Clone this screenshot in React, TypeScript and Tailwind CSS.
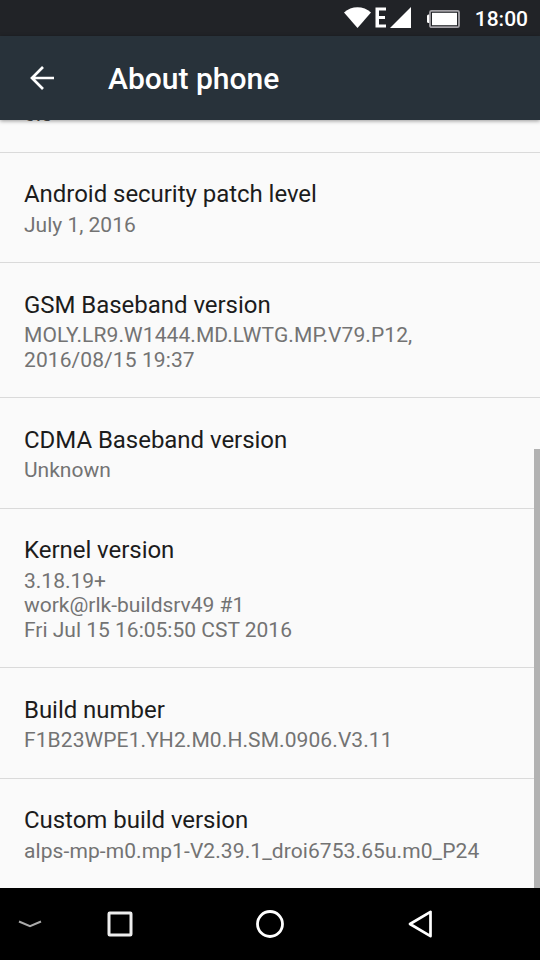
interface AboutEntry {
  title: string
  summary: string[]
  wide?: boolean
}

const entries: AboutEntry[] = [
  { title: "Android security patch level", summary: ["July 1, 2016"] },
  { title: "GSM Baseband version", summary: ["MOLY.LR9.W1444.MD.LWTG.MP.V79.P12,", "2016/08/15 19:37"], wide: true },
  { title: "CDMA Baseband version", summary: ["Unknown"] },
  { title: "Kernel version", summary: ["3.18.19+", "work@rlk-buildsrv49 #1", "Fri Jul 15 16:05:50 CST 2016"] },
  { title: "Build number", summary: ["F1B23WPE1.YH2.M0.H.SM.0906.V3.11"], wide: true },
  { title: "Custom build version", summary: ["alps-mp-m0.mp1-V2.39.1_droi6753.65u.m0_P24"], wide: true },
]

function StatusBar() {
  return (
    <div className="flex h-9 shrink-0 items-center justify-end bg-[#212327] pr-3 text-white">
      {/* Wifi and mobile signal */}
      <svg className="h-9 w-[68px]" viewBox="0 0 68 36" fill="currentColor">
        <path d="M0 12.5C7.5 5.5 19.5 5.5 27 12.5L13.5 28Z" />
        <path d="M31.5 7.5H42V10.5H35V16H41V19H35V24.5H42V27.5H31.5Z" />
        <path d="M67 7V28H46Z" />
      </svg>
      {/* Battery */}
      <svg className="ml-[14px] h-9 w-[34px]" viewBox="0 0 34 36" fill="none">
        <path d="M4 14.5H2.5Q1 14.5 1 16V21.5Q1 23 2.5 23H4Z" fill="white" />
        <rect x="4" y="10.8" width="29" height="16.4" rx="1.5" stroke="#a5a3a8" strokeWidth="1.8" />
        <rect x="6" y="12.8" width="25" height="12.4" fill="white" />
      </svg>
      <span className="ml-[15px] pt-[2px] text-[21px] font-medium leading-none">18:00</span>
    </div>
  )
}

function Toolbar() {
  return (
    <header className="z-10 flex h-[84px] shrink-0 items-center bg-[#28323a] pl-[29px] text-white shadow-[0_1px_4px_rgba(0,0,0,0.4)]">
      <svg className="h-[26px] w-[26px]" viewBox="0 0 26 26" fill="none" stroke="currentColor" strokeWidth="2.7">
        <path d="M25 13H3M14 2L3 13L14 24" />
      </svg>
      <h1 className="ml-[53px] pt-px text-[30px] font-medium leading-none">About phone</h1>
    </header>
  )
}

function EntryRow({ title, summary, wide }: AboutEntry) {
  return (
    <li className="border-b border-[#dadada] px-6 pt-[27.5px] pb-[25px] last:border-b-0">
      <h2 className="mb-[4.5px] text-2xl leading-7 tracking-[-0.04px] text-[#1c1c1c]">{title}</h2>
      <div className={wide ? "tracking-[0.09px]" : "tracking-normal"}>
        {summary.map((line) => (
          <p key={line} className="text-[21px] leading-[24.5px] whitespace-nowrap text-[#737373]">
            {line}
          </p>
        ))}
      </div>
    </li>
  )
}

function NavigationBar() {
  return (
    <nav className="grid h-[72px] shrink-0 grid-cols-[60px_120px_180px_120px_60px] items-center justify-items-center bg-black text-white">
      <svg className="h-2 w-6" viewBox="0 0 24 8" fill="none" stroke="#aaaaaa" strokeWidth="2">
        <path d="M1 1.5L12 6.2L23 1.5" />
      </svg>
      <svg className="h-[26px] w-[26px]" viewBox="0 0 26 26" fill="none" stroke="#eeeeee" strokeWidth="3">
        <rect x="2" y="2" width="22" height="22" rx="0.7" />
      </svg>
      <svg className="h-7 w-7" viewBox="0 0 28 28" fill="none" stroke="currentColor" strokeWidth="2.8">
        <circle cx="14" cy="14" r="12.5" />
      </svg>
      <svg className="h-7 w-7" viewBox="0 0 28 28" fill="none" stroke="currentColor" strokeWidth="2.7" strokeLinejoin="round">
        <path d="M24.5 1.8V26.2L4 14Z" />
      </svg>
    </nav>
  )
}

export default function App() {
  return (
    <div className="flex h-[960px] w-[540px] flex-col overflow-hidden bg-[#fafafa] font-[Roboto,sans-serif]">
      <StatusBar />
      <Toolbar />
      <main className="relative flex min-h-0 flex-1 flex-col justify-end overflow-hidden">
        {/* Tail of the row that is scrolled under the toolbar */}
        <div className="h-[33px] shrink-0 border-b border-[#dadada] px-6">
          <p className="-mt-[18px] text-[21px] leading-6 text-[#4a4a4a]">6.0</p>
        </div>
        <ul className="shrink-0">
          {entries.map((entry) => (
            <EntryRow key={entry.title} {...entry} />
          ))}
        </ul>
        {/* Scroll thumb */}
        <div className="absolute right-0 bottom-0 h-[439px] w-1.5 bg-[#b2b2b2]" />
      </main>
      <NavigationBar />
    </div>
  )
}
